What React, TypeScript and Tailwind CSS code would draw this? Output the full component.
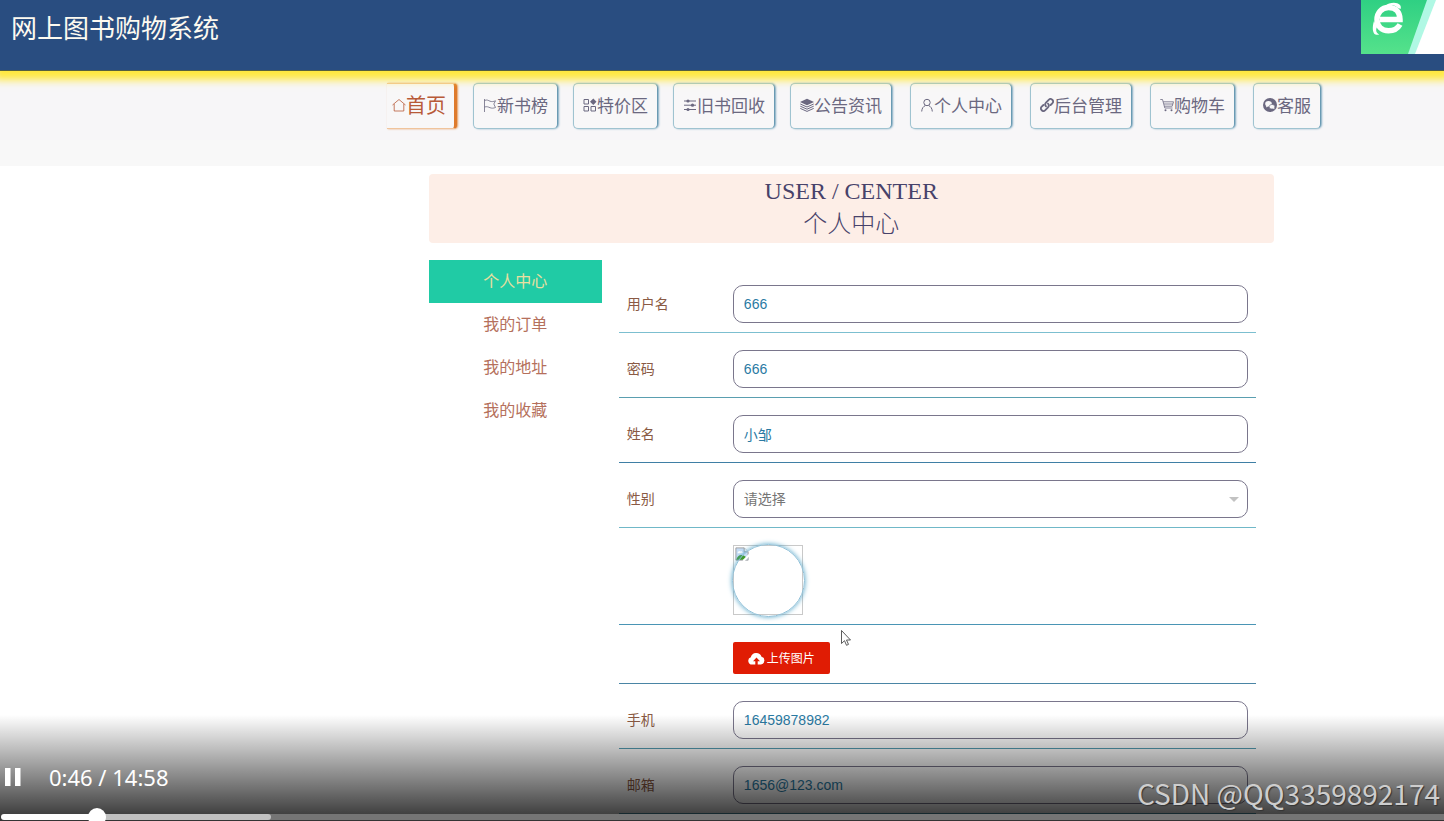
import type { ReactNode } from 'react';
import { clsx } from 'clsx';

function Icon({ children }: { children: ReactNode }) {
  return (
    <svg viewBox="0 0 14 14" className="w-[14px] h-[14px] shrink-0" fill="none" stroke="currentColor" strokeWidth="1" aria-hidden="true">
      {children}
    </svg>
  );
}

const homeIcon = <Icon><path d="M.5 7 7 1.5 13.5 7M2.2 6v7h9.6V6" strokeWidth=".8" /></Icon>;
const flagIcon = <Icon><path d="M1.5 1v13M1.5 2.500c2.500-1.200 4 .1 5.500.7 1.700.6 3.300.5 5.500-.4L10.800 6l1.700 3.500c-2.200.9-3.800.8-5.500.2C5.500 9.100 4 8.200 1.500 9" strokeWidth=".8" /></Icon>;
const partsIcon = (
  <Icon>
    <path d="M1 1.500h4.500V6H1zM1 8.500h4.500V13H1zM8 8.500h4.500V13H8z" />
    <path d="M10.300.5 13.500 3.700 10.300 7 7 3.700z" fill="currentColor" stroke="none" />
  </Icon>
);
const sliderIcon = (
  <Icon>
    <path d="M1 3h12M1 7.200h12M1 11.500h12" />
    <g fill="currentColor" stroke="none">
      <circle cx="5" cy="3" r="1.600" />
      <circle cx="9.500" cy="7.200" r="1.600" />
      <circle cx="5" cy="11.500" r="1.600" />
    </g>
  </Icon>
);
const layersIcon = (
  <Icon>
    <path d="M7 .8 14 4 7 7.200 0 4z" fill="currentColor" stroke="none" />
    <path d="m.3 6 6.700 3 6.700-3M.3 8.200l6.700 3 6.700-3M.3 10.400l6.700 3 6.700-3" />
  </Icon>
);
const userIcon = <Icon><circle cx="7" cy="4.500" r="3.200" /><path d="M1.700 13.500c.2-3.300 1.600-5 3.700-6M12.300 13.500c-.2-3.300-1.600-5-3.700-6" /></Icon>;
const linkIcon = (
  <Icon>
    <g strokeWidth="1.800" strokeLinecap="round">
      <path d="M6 8.300a2.600 2.600 0 0 1 0-3.600l2.700-2.900a2.500 2.500 0 0 1 3.600 3.500L10.600 7" />
      <path d="M8 5.700a2.600 2.600 0 0 1 0 3.600l-2.700 2.900a2.500 2.500 0 0 1-3.600-3.500L3.400 7" />
    </g>
  </Icon>
);
const cartIcon = (
  <Icon>
    <path d="M.3 1.500h2.200L4.800 10h7.700M3.200 3.800h10.300l-1.300 4.400H4.400M4 6h8.800" strokeWidth=".8" />
    <circle cx="5.500" cy="12.300" r="1" fill="currentColor" stroke="none" />
    <circle cx="11.500" cy="12.300" r="1" fill="currentColor" stroke="none" />
  </Icon>
);
const chatIcon = (
  <Icon>
    <circle cx="7" cy="7" r="7" fill="currentColor" stroke="none" />
    <g fill="#f8f7f8" stroke="none">
      <ellipse cx="5.500" cy="5.700" rx="3.300" ry="2.800" />
      <path d="m3.300 7.500-.2 2 2-1.200z" />
      <ellipse cx="9" cy="8.700" rx="2.800" ry="2.300" stroke="#6b6880" strokeWidth=".6" />
      <path d="m10 10.300 1.400 1.200-.2-2z" />
    </g>
  </Icon>
);

const mainLinks = [
  { label: '新书榜', icon: flagIcon },
  { label: '特价区', icon: partsIcon },
  { label: '旧书回收', icon: sliderIcon },
  { label: '公告资讯', icon: layersIcon },
];

const userLinks = [
  { label: '个人中心', icon: userIcon },
  { label: '后台管理', icon: linkIcon },
  { label: '购物车', icon: cartIcon },
  { label: '客服', icon: chatIcon },
];

const menu = ['个人中心', '我的订单', '我的地址', '我的收藏'];

function NavLink({ label, icon }: { label: string; icon: ReactNode }) {
  return (
    <a href="#" className="flex h-[46px] items-center whitespace-nowrap rounded-[5px] border border-[#9fc3d0] border-r-[#6a9ab3] bg-[#f8f7f8] px-[9px] pb-[2px] text-[17px] text-[#6b6880] shadow-[1px_0_2px_#7fa9c0]">
      {icon}
      {label}
    </a>
  );
}

function Row({ label, id, line, children }: { label?: string; id?: string; line: string; children: ReactNode }) {
  return (
    <div className={clsx('flex items-center border-b pt-[17px] pr-2 pb-[9px] pl-2', line)}>
      <div className="w-[106px] shrink-0 pb-[2px] text-sm text-[#8a5a44]">
        {label && <label htmlFor={id}>{label}</label>}
      </div>
      <div className="relative flex-1">{children}</div>
    </div>
  );
}

function Field({ label, id, value, line }: { label: string; id: string; value: string; line: string }) {
  return (
    <Row label={label} id={id} line={line}>
      <input
        id={id}
        type="text"
        defaultValue={value}
        className="block h-[38px] w-full rounded-[10px] border border-[#7a768c] bg-white px-[10px] font-['Liberation_Sans','Noto_Sans_CJK_SC',sans-serif] text-sm text-[#2a7aa3] outline-none"
      />
    </Row>
  );
}

function Header() {
  return (
    <header className="relative z-10 flex h-[71px] items-start justify-between border-b border-[#56603f] bg-[#294d80] shadow-[0_3px_8px_6px_#ffe83f]">
      <h1 className="pt-[7px] pl-[11px] text-[26px] leading-10 text-[#fdfaf0]">网上图书购物系统</h1>
      <svg viewBox="0 0 83 54" className="h-[54px] w-[83px]" aria-hidden="true">
        <defs>
          <linearGradient id="badge" x1="0" y1="0" x2="0" y2="1">
            <stop offset="0" stopColor="#2fd083" />
            <stop offset="1" stopColor="#55e28b" />
          </linearGradient>
        </defs>
        <rect width="83" height="54" fill="url(#badge)" />
        <path d="M66 0h17v54H47z" fill="#b0f8e4" />
        <path d="M75 0h8v54H54z" fill="#fff" />
        <path d="M39 24.500C36.500 29 32 30.800 27.500 30.800 20.500 30.800 16 26 16 19.500S20.500 7.500 27.500 7.500C34.500 7.500 39 12 39 19.500H19" fill="none" stroke="#fff" strokeWidth="5.500" />
        <path d="M24 6C28 2.500 35.500 1.500 39 5c1 1.300 1 2.500.6 4L36 7.500C34 4.500 29 5 24 6z" fill="#fff" />
        <path d="M13 21c-2 6-1.500 12.500 1.500 13.500 1.200.4 2.600.3 3.700 0C15 33 14.500 30 16 27z" fill="#fff" />
      </svg>
    </header>
  );
}

function Player() {
  return (
    <div className="absolute inset-x-0 bottom-0 z-20 flex h-[106px] flex-col justify-end bg-linear-to-b from-transparent to-black/80">
      <div className="flex items-center gap-7 pb-[10px] pl-[5px] text-white">
        <button type="button" aria-label="Pause">
          <svg viewBox="0 0 16 18" className="h-[18px] w-4" fill="currentColor">
            <path d="M0 0h5.500v18H0zM10 0h5.500v18H10z" />
          </svg>
        </button>
        <span className="font-['Noto_Sans',sans-serif] text-[22px] leading-[54px]">0:46 / 14:58</span>
      </div>
      <div className="relative mb-px flex h-[6px] pl-px">
        <div className="w-[96px] rounded-l-full bg-white" />
        <div className="flex-1 bg-[#757575]">
          <div className="h-full w-[174px] rounded-r-full bg-[#c0c0c0]" />
        </div>
        <div className="absolute -top-[6px] left-[88px] size-[18px] rounded-full bg-white" />
      </div>
      <p className="absolute right-[4px] bottom-[8px] text-[28px] leading-10 text-[#cdcdcd] [text-shadow:1px_1px_1px_#333]">CSDN @QQ3359892174</p>
    </div>
  );
}

export default function App() {
  return (
    <div className="relative min-h-screen overflow-hidden bg-white pb-[7px] font-['Noto_Sans_CJK_SC',sans-serif]">
      <Header />
      <div className="bg-[#f8f8f8] pb-[26px]">
        <nav className="flex gap-4 bg-[#f7f6f8] pt-3 pb-[11px] pl-[26.8%]">
          <a href="#" className="flex h-[46px] items-center whitespace-nowrap rounded-r-[4px] border-y border-r-[3px] border-y-[#f0c49c] border-r-[#de7a2c] bg-[#f8f7f8] pr-2 pb-[2px] pl-[5px] text-xl text-[#b85a38] shadow-[1px_0_2px_#e59a5c]">
            {homeIcon}
            首页
          </a>
          <div className="flex gap-[18px]">
            <div className="flex gap-[15px]">
              {mainLinks.map((item) => <NavLink key={item.label} {...item} />)}
            </div>
            {userLinks.map((item) => <NavLink key={item.label} {...item} />)}
          </div>
        </nav>
      </div>

      <main className="mt-2 mr-[11.8%] ml-[29.7%]">
        <div className="rounded-[4px] bg-[#fdeee7] pt-px pb-[2px] text-center font-['Liberation_Serif','Noto_Sans_CJK_SC',serif] text-2xl leading-[33px] text-[#47426a]">
          <h2>USER / CENTER</h2>
          <p className="font-light">个人中心</p>
        </div>

        <div className="mt-[17px] flex gap-[17px]">
          <aside className="w-[173px] shrink-0 text-center">
            {menu.map((item, i) => (
              <a
                key={item}
                href="#"
                className={clsx('block h-[43px] leading-[41px]', i === 0 ? 'bg-[#20cba5] text-[#e8dfa0]' : 'text-[#b5705c]')}
              >
                {item}
              </a>
            ))}
          </aside>

          <form className="mr-[18px] flex-1 pt-2">
            <Field label="用户名" id="username" value="666" line="border-[#7cbfd0]" />
            <Field label="密码" id="password" value="666" line="border-[#5a9fb0]" />
            <Field label="姓名" id="name" value="小邹" line="border-[#3f7fa5]" />
            <Row label="性别" id="gender" line="border-[#70b8c8]">
              <select id="gender" className="block h-[38px] w-full appearance-none rounded-[10px] border border-[#7a768c] bg-white px-[10px] pb-[2px] text-sm text-[#757575] outline-none">
                <option>请选择</option>
                <option>男</option>
                <option>女</option>
              </select>
              <span className="pointer-events-none absolute top-[17px] right-[9px] border-x-[5px] border-t-[5px] border-x-transparent border-t-[#c2c2c2]" />
            </Row>
            <Row line="border-[#4a95b5]">
              <div className="relative size-[70px] border border-[#c9c9c9]">
                <svg viewBox="0 0 16 16" className="m-px size-[14px]" aria-hidden="true">
                  <path d="M1 1h9.500L15 5.500V15H1z" fill="#c5dcf5" stroke="#999" />
                  <path d="M10.500 1v4.500H15" fill="#fff" stroke="#999" />
                  <path d="M3 7a2 2 0 0 1 3-2 2 2 0 0 1 3 2z" fill="#fff" />
                  <path d="M1.500 14.500c1.500-6 7-7 11-3v3z" fill="#3f9a2c" />
                  <path d="m9.500 16 7-7" stroke="#fff" strokeWidth="2.500" />
                </svg>
                <div className="absolute -top-[2px] -left-[2px] size-[73px] rounded-full border border-[#8fc0d8] shadow-[0_0_5px_#4fa3c7]" />
              </div>
            </Row>
            <Row line="border-[#4a85a5]">
              <button type="button" className="flex h-8 w-[97px] items-center justify-center gap-[2px] rounded-[2px] bg-[#e01c04] text-xs text-white">
                <svg viewBox="0 0 17 13" className="h-[13px] w-[17px]" aria-hidden="true">
                  <path d="M4 12.500a3.700 3.700 0 0 1-1.200-7.200A5.600 5.600 0 0 1 13.500 4.700 4 4 0 0 1 13 12.500z" fill="#fff" />
                  <path d="M8.500 5.500 12 9.200H9.700V13H7.300V9.200H5z" fill="#e01c04" />
                </svg>
                上传图片
              </button>
              <svg viewBox="0 0 10 16" className="absolute -top-3 left-[108px] h-4 w-[10px]" aria-hidden="true">
                <path d="M.5.500v13l3-2.800 2 4.600 2-.9-2-4.400h4z" fill="#fff" stroke="#333" strokeWidth=".8" />
              </svg>
            </Row>
            <Field label="手机" id="phone" value="16459878982" line="border-[#559fb5]" />
            <Field label="邮箱" id="email" value="1656@123.com" line="border-[#559fb5]" />
          </form>
        </div>
      </main>
      <Player />
    </div>
  );
}
